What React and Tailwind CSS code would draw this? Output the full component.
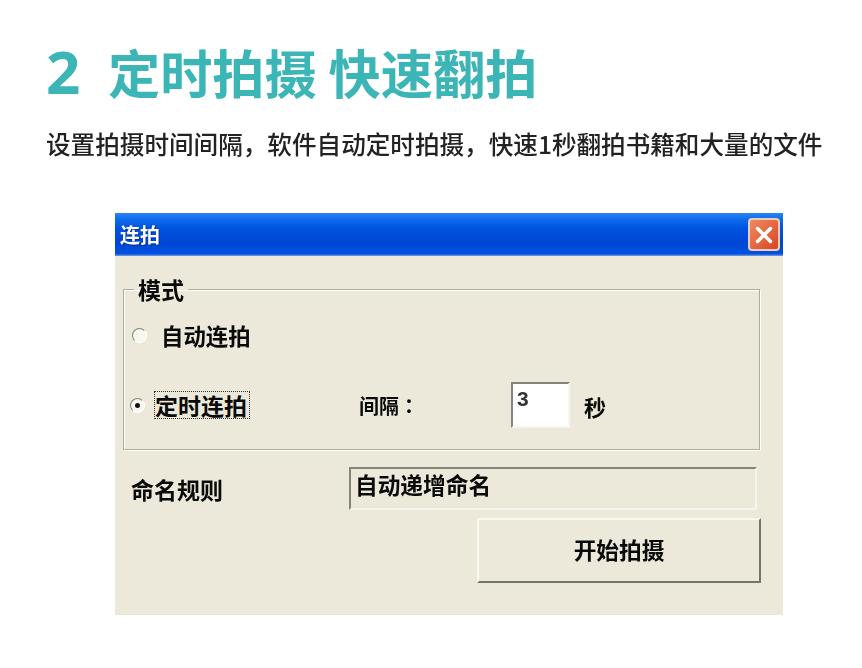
import { X } from 'lucide-react';

function Radio({ checked = false }) {
  return (
    <span className="flex h-[15px] w-[15px] flex-none items-center justify-center rounded-full border-[1.5px] border-t-[#85847a] border-l-[#85847a] border-r-white border-b-white bg-[#f7f6f0]">
      {checked && <span className="h-[5px] w-[5px] rounded-full bg-[#111]" />}
    </span>
  );
}

function TitleBar() {
  return (
    <div className="flex h-[43px] items-center justify-between bg-[linear-gradient(to_bottom,#2a86f4_0%,#0f6cec_14%,#0054e0_35%,#0046d4_70%,#0052e2_95%,#7f9fd8_100%)] pl-[5px] pr-[3px]">
      <span className="pt-[1px] text-[20px] font-bold leading-none text-white blur-[0.4px] [text-shadow:1px_1px_0_#0a2f8f]">连拍</span>
      <button className="flex h-[33px] w-[32px] items-center justify-center rounded-[4px] border-2 border-[#eccdb8] bg-gradient-to-br from-[#ee8a60] to-[#d8431f]">
        <X size={26} strokeWidth={3.2} color="#fff" />
      </button>
    </div>
  );
}

function ModeGroup() {
  return (
    <fieldset className="ml-[8px] mr-[23px] h-[174px] border border-[#aeac9b] px-0 pb-0 [box-shadow:inset_1px_1px_0_#fff,1px_1px_0_#fff]">
      <legend className="ml-[10px] px-[4px] text-[23px] font-bold leading-[26px] text-[#0a0a0a] blur-[0.4px]">模式</legend>
      <div className="mt-[16px] flex h-[34px] items-center pl-[8px]">
        <Radio />
        <span className="ml-[14px] text-[22.4px] font-bold leading-none text-[#0a0a0a] blur-[0.4px]">自动连拍</span>
      </div>
      <div className="mt-[36px] flex h-[34px] items-center pl-[6px]">
        <Radio checked />
        <span className="ml-[9px] w-[96px] border border-dotted border-[#333] text-[23px] font-bold leading-[26px] whitespace-nowrap text-[#0a0a0a]">定时连拍</span>
        <span className="ml-[109px] w-[152px] pt-[2px] font-['Noto_Sans_CJK_TC',sans-serif] text-[20px] font-bold leading-none text-[#0a0a0a] blur-[0.4px]">间隔：</span>
        <div className="h-[46px] w-[59px] border-2 border-t-[#85847a] border-l-[#85847a] border-r-[#f6f5ee] border-b-[#f6f5ee] bg-white pl-[4px] font-['Liberation_Sans',sans-serif] text-[21px] font-bold leading-[30px] text-[#333] blur-[0.4px]">3</div>
        <span className="ml-[14px] pt-[2px] text-[22px] font-bold leading-none text-[#0a0a0a] blur-[0.4px]">秒</span>
      </div>
    </fieldset>
  );
}

function NamingRow() {
  return (
    <div className="mt-[17px] flex h-[43px] items-center pl-[16px] pr-[26px]">
      <span className="w-[218px] pt-[1px] text-[23px] font-bold leading-none text-[#0a0a0a] blur-[0.4px]">命名规则</span>
      <div className="h-full flex-1 border-2 border-t-[#85847a] border-l-[#85847a] border-r-[#f6f5ee] border-b-[#f6f5ee] pl-[4px] text-[22.7px] font-bold leading-[32px] text-[#0a0a0a]">
        <span className="blur-[0.4px]">自动递增命名</span>
      </div>
    </div>
  );
}

export default function App() {
  return (
    <div className="h-[668px] w-[862px] overflow-hidden bg-white pt-[39px] font-['Noto_Sans_CJK_SC','Liberation_Sans',sans-serif]">
      <h1 className="flex h-[64px] items-center pl-[46px] font-bold leading-none text-[#3bb5b5] blur-[0.5px]">
        <span className="w-[62px] font-['Noto_Sans',sans-serif] text-[60px]">2</span>
        <span className="text-[52.2px] whitespace-nowrap">定时拍摄 快速翻拍</span>
      </h1>
      <p className="mt-[23px] pl-[46px] text-[24.6px] font-medium leading-[34px] whitespace-nowrap text-[#222] blur-[0.4px]">设置拍摄时间间隔，软件自动定时拍摄，快速1秒翻拍书籍和大量的文件</p>

      <div className="ml-[115px] mt-[53px] h-[402px] w-[668px] bg-[#ece9da]">
        <TitleBar />
        <div className="pt-[19px]">
          <div className="pt-[1px]">
            <ModeGroup />
          </div>
          <NamingRow />
          <div className="ml-[362px] mr-[22px] mt-[8px] flex h-[65px] items-center justify-center border-2 border-t-[#f8f7f0] border-l-[#f8f7f0] border-r-[#77766a] border-b-[#77766a]">
            <span className="text-[22.7px] font-bold leading-none text-[#0a0a0a] blur-[0.4px]">开始拍摄</span>
          </div>
        </div>
      </div>
    </div>
  );
}
